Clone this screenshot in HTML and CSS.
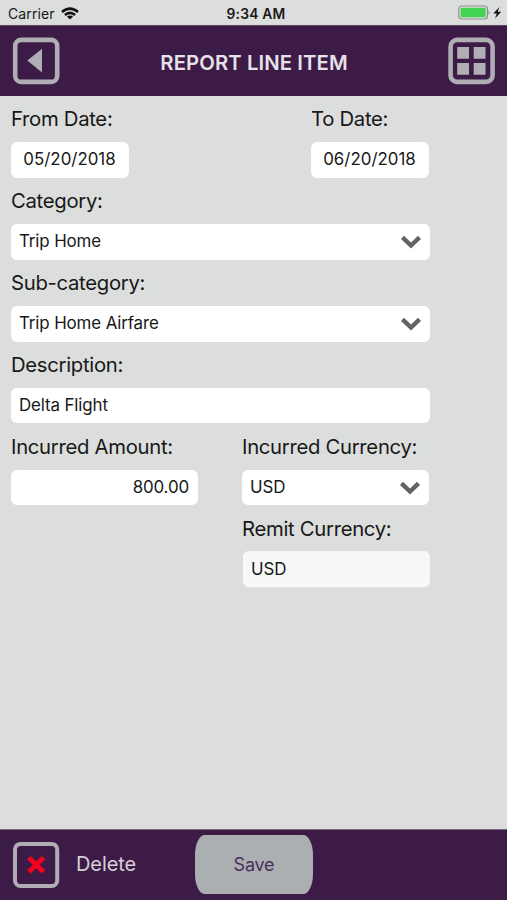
FILE: index.html
```html
<!DOCTYPE html>
<html lang="en">
<head>
<meta charset="utf-8">
<title>Report Line Item</title>
<link rel="stylesheet" href="styles.css">
</head>
<body>
<div class="app">
  <div class="status">
    <div class="status-left">
      <span class="carrier">Carrier</span>
      <svg class="wifi" width="18" height="13" viewBox="0 0 18 13"><g fill="none" stroke="#111" stroke-width="2.6"><path d="M1 5.1Q9-1.7 17 5.1"/><path d="M3.9 8.1Q9 3.7 14.1 8.1"/></g><path d="M9 12.6L5.9 9.6Q9 7.3 12.1 9.6Z" fill="#111"/></svg>
    </div>
    <span class="time">9:34 AM</span>
    <div class="status-right">
      <svg width="44" height="16" viewBox="0 0 44 16"><rect x=".8" y="1" width="28.6" height="13" rx="3" fill="none" stroke="#8c908e" stroke-width="1.2"/><rect x="2.6" y="2.8" width="25" height="9.4" rx="1.2" fill="#43d551"/><path d="M30.6 5.2Q32.6 7.5 30.6 9.8Z" fill="#777"/><path d="M41.4 2L35.3 8.4H38.8L37 13.6L43.2 6.8H39.7Z" fill="#111"/></svg>
    </div>
  </div>
  <header class="header">
    <button class="icon-btn" aria-label="Back"><svg width="48" height="48" viewBox="0 0 48 48"><rect x="3.2" y="2.9" width="42" height="42" rx="6" fill="none" stroke="#b0adb5" stroke-width="4.6"/><path d="M15.3 23.6L30 11.7V35.6Z" fill="#b0adb5"/></svg></button>
    <h1>REPORT LINE ITEM</h1>
    <button class="icon-btn" aria-label="Menu"><svg width="48" height="48" viewBox="0 0 48 48"><rect x="2.6" y="2.9" width="42" height="42" rx="6.5" fill="none" stroke="#b0adb5" stroke-width="4.6"/><path d="M9.2 10H21V21.8H9.2ZM25.7 10H37.5V21.8H25.7ZM9.2 26H21V37.8H9.2ZM25.7 26H37.5V37.8H25.7Z" fill="#b0adb5"/></svg></button>
  </header>
  <main class="form">
    <div class="row">
      <div class="field date"><label>From Date:</label><div class="control">05/20/2018</div></div>
      <div class="field date to"><label>To Date:</label><div class="control">06/20/2018</div></div>
    </div>
    <div class="field"><label>Category:</label><div class="control">Trip Home<svg class="chev" width="22" height="16" viewBox="0 0 22 16"><path d="M2.5 3.4L11 11.5L19.5 3.4" fill="none" stroke="#636363" stroke-width="4.4"/></svg></div></div>
    <div class="field"><label>Sub-category:</label><div class="control">Trip Home Airfare<svg class="chev" width="22" height="16" viewBox="0 0 22 16"><path d="M2.5 3.4L11 11.5L19.5 3.4" fill="none" stroke="#636363" stroke-width="4.4"/></svg></div></div>
    <div class="field"><label>Description:</label><div class="control">Delta Flight</div></div>
    <div class="row">
      <div class="field half"><label>Incurred Amount:</label><div class="control amount">800.00</div></div>
      <div class="field half currency"><label>Incurred Currency:</label><div class="control">USD<svg class="chev" width="22" height="16" viewBox="0 0 22 16"><path d="M2.5 3.4L11 11.5L19.5 3.4" fill="none" stroke="#636363" stroke-width="4.4"/></svg></div></div>
    </div>
    <div class="field half remit"><label>Remit Currency:</label><div class="control readonly">USD</div></div>
  </main>
  <footer class="footer">
    <button class="icon-btn" aria-label="Delete item"><svg width="48" height="48" viewBox="0 0 48 48"><rect x="3" y="2.9" width="42.2" height="42" rx="5.5" fill="none" stroke="#b0adb5" stroke-width="4"/><path d="M16.8 16.6L31.6 31M31.6 16.6L16.8 31" stroke="#f5001d" stroke-width="4.8"/></svg></button>
    <span class="delete">Delete</span>
    <button class="save">Save</button>
  </footer>
</div>
</body>
</html>
```
FILE: styles.css
```css
* { box-sizing: border-box; }
body { margin: 0; font-family: Inter, "Liberation Sans", sans-serif; color: #171817; }
button { font: inherit; border: 0; padding: 0; background: none; }
svg { display: block; flex: none; }
.app { width: 507px; height: 900px; display: flex; flex-direction: column; background: #dcdedd; overflow: hidden; }
.status { height: 25px; display: grid; grid-template-columns: 1fr auto 1fr; align-items: center; padding: 1px 5px 0 8px; }
.status-left { display: flex; align-items: center; gap: 6px; }
.carrier { font-size: 14px; letter-spacing: .1px; }
.time { font-size: 13.8px; font-weight: 600; letter-spacing: .25px; margin: 2px 0 0 2px; }
.status-right { justify-self: end; }
.header { height: 71px; display: flex; align-items: center; justify-content: space-between; padding: 0 11px 0 12px; background: #3c1c46; border-top: 1px solid #5b4862; }
.header h1 { margin: 3px 0 0; font-size: 20.3px; font-weight: 600; line-height: 24px; letter-spacing: .1px; color: #e7e1ea; }
.icon-btn { width: 48px; height: 48px; }
.form { flex: 1; padding: .3px 0 0 11px; width: 430px; }
.row { display: flex; justify-content: space-between; }
.field { height: 81.9px; display: flex; flex-direction: column; }
.field label { height: 45.7px; line-height: 46px; font-size: 20.3px; letter-spacing: -.3px; white-space: nowrap; }
.control { height: 35.8px; display: flex; align-items: center; justify-content: space-between; padding: 0 8px 1px; border-radius: 6px; background: #fff; font-size: 16.9px; letter-spacing: -.12px; white-space: nowrap; }
.date { width: 118px; }
.date .control { justify-content: center; padding: 0 1px 1px 0; letter-spacing: 0; }
.to { margin-right: 1px; }
.half { width: 187px; }
.control.amount { justify-content: flex-end; padding-right: 9px; }
.chev { margin: 2px .5px 0 0; }
.remit { margin-left: 232px; }
.remit label { margin-left: -1px; }
.readonly { background: #f8f8f8; }
.currency { margin-right: 1px; }
.footer { height: 71px; display: flex; align-items: center; padding: 0 12px; background: #3c1c46; border-top: 1px solid #78687e; }
.delete { width: 119px; margin: -2px 0 0 16px; font-size: 20px; letter-spacing: -.1px; color: #d8cfdb; }
.save { width: 118px; height: 59px; margin-top: -1px; border-radius: 10px / 20px; background: #acafb2; color: #49305a; font-size: 18px; letter-spacing: -.2px; }
```
